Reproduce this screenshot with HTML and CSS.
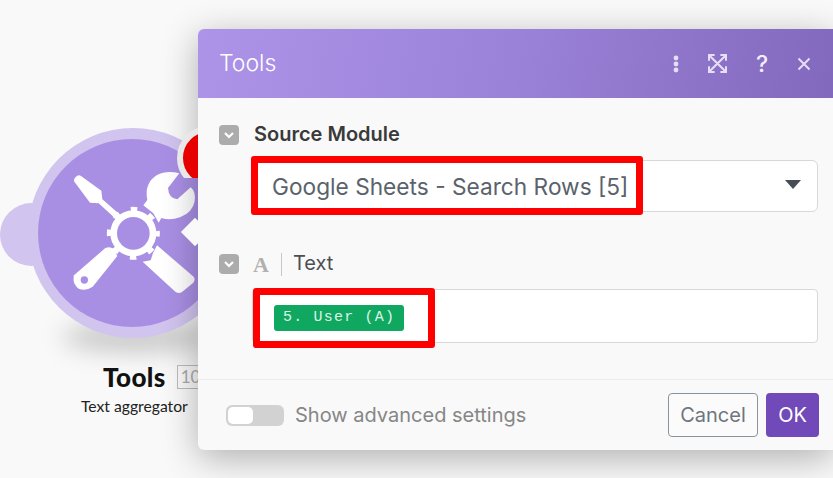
FILE: index.html
```html
<!DOCTYPE html>
<html lang="en">
<head>
<meta charset="utf-8">
<title>Tools</title>
<link rel="stylesheet" href="styles.css">
</head>
<body>
<main class="canvas">
  <section class="node">
    <div class="node-bump"></div>
    <div class="node-shadow"></div>
    <div class="node-ring"></div>
    <div class="node-disc"></div>
    <svg class="node-icon" viewBox="0 0 450 450" aria-hidden="true">
      <path class="tool" d="M42 64 Q41 56 47 51 L52 47 Q58 44 63 48 L124 92 L127 118 L174 159 L162 172 L116 130 L90 128 Z"/>
      <path class="tool" d="M136 264 Q150 258 160 266 L172 288 L98 380 Q78 394 56 386 Q36 372 42 346 Z"/>
      <circle class="hole" cx="73" cy="360" r="11"/>
      <path class="tool" d="M291 256 L401 350 Q407 358 400 368 L366 396 Q356 403 346 395 L248 305 L272 301 L279 279 Z"/>
      <path class="tool" d="M250 136 L262 120 Q252 70 290 46 Q320 30 358 40 L324 84 Q326 116 352 118 L392 82 Q408 95 404 124 Q398 158 360 172 Q330 182 304 174 L296 188 L280 160 Z"/>
      <circle class="gear-ring" cx="220" cy="220" r="59"/>
      <circle class="gear-teeth" cx="220" cy="220" r="73"/>
    </svg>
    <div class="node-title">
      <span class="node-name">Tools</span>
      <span class="node-id">10</span>
    </div>
    <div class="node-sub">Text aggregator</div>
  </section>

  <section class="dialog">
    <header class="dialog-head">
      <h1 class="dialog-title">Tools</h1>
      <div class="dialog-actions">
        <svg class="action action-dots" viewBox="0 0 6 18" aria-hidden="true"><circle cx="3" cy="3" r="2.4"/><circle cx="3" cy="9" r="2.4"/><circle cx="3" cy="15" r="2.4"/></svg>
        <svg class="action action-expand" viewBox="0 0 20 20" aria-hidden="true"><path d="M1 7V1h6M13 1h6v6M19 13v6h-6M7 19H1v-6M2 2l16 16M18 2L2 18"/></svg>
        <span class="action-help">?</span>
        <svg class="action action-close" viewBox="0 0 14 14" aria-hidden="true"><path d="M1.5 1.5l11 11M12.5 1.5l-11 11"/></svg>
      </div>
    </header>

    <div class="dialog-body">
      <div class="field-label">
        <span class="chev"><svg viewBox="0 0 12 8" aria-hidden="true"><path d="M2 2l4 4 4-4"/></svg></span>
        <span class="label-strong">Source Module</span>
      </div>
      <div class="select">
        <span class="select-value">Google Sheets - Search Rows [5]</span>
        <span class="select-arrow"></span>
      </div>

      <div class="field-label field-label-next">
        <span class="chev"><svg viewBox="0 0 12 8" aria-hidden="true"><path d="M2 2l4 4 4-4"/></svg></span>
        <span class="type-a">A</span>
        <span class="type-sep"></span>
        <span class="label-plain">Text</span>
      </div>
      <div class="text-input">
        <span class="pill">5. User (A)</span>
      </div>
    </div>

    <footer class="dialog-foot">
      <div class="toggle"><span class="toggle-knob"></span></div>
      <span class="toggle-label">Show advanced settings</span>
      <div class="foot-buttons">
        <button class="btn btn-cancel" type="button">Cancel</button>
        <button class="btn btn-ok" type="button">OK</button>
      </div>
    </footer>

    <div class="mark mark-select"></div>
    <div class="mark mark-input"></div>
  </section>

  <div class="node-badge"></div>
</main>
</body>
</html>
```

FILE: styles.css
```css
* { box-sizing: border-box; }
html, body { margin: 0; height: 100%; }
body { background: #f9f9f9; overflow: hidden; }

.canvas {
  position: relative;
  width: 833px;
  height: 478px;
  overflow: hidden;
  font-family: Inter, "Liberation Sans", sans-serif;
}

/* node on the free canvas */
.node { position: absolute; left: 0; top: 0; width: 240px; height: 430px; }
.node-bump { position: absolute; left: 0; top: 203px; width: 63px; height: 63px; border-radius: 50%; background: #d1c4ee; }
.node-shadow { position: absolute; left: 62px; top: 322px; width: 150px; height: 30px; border-radius: 50%; background: rgba(0,0,0,.2); filter: blur(12px); }
.node-ring { position: absolute; left: 28px; top: 128px; width: 210px; height: 210px; border-radius: 50%; background: #d1c4ee; }
.node-disc { position: absolute; left: 38px; top: 139px; width: 188px; height: 188px; border-radius: 50%; background: #a98fe4; }
.node-icon { position: absolute; left: 60px; top: 160px; width: 150px; height: 150px; }
.tool { fill: #fff; }
.hole { fill: #a98fe4; }
.gear-ring { fill: none; stroke: #fff; stroke-width: 20; }
.gear-teeth { fill: none; stroke: #fff; stroke-width: 13; stroke-dasharray: 20 37.3; stroke-dashoffset: 10; }
.node-title { position: absolute; left: 103px; top: 363px; display: flex; align-items: center; gap: 11px; }
.node-name { font-family: Lato, sans-serif; font-weight: 900; font-size: 26px; line-height: 28px; color: #111; letter-spacing: .4px; }
.node-id { width: 40px; height: 24px; border: 1px solid #bbb; color: #aaa; font-family: Lato, sans-serif; font-size: 17px; line-height: 22px; padding-left: 3px; }
.node-sub { position: absolute; left: 81px; top: 397px; font-family: Lato, sans-serif; font-size: 15.7px; line-height: 18px; color: #222; white-space: nowrap; }

/* badge stays bright above the dialog's shadow, cut off at the dialog edge */
.node-badge { position: absolute; left: 177px; top: 126px; width: 21px; height: 52px; overflow: hidden; }
.node-badge::before { content: ""; display: block; width: 52px; height: 52px; border-radius: 50%; background: #e60000; border: 6px solid #e8e8e8; }

/* dialog */
.dialog {
  position: absolute;
  left: 198px;
  top: 29px;
  width: 635px;
  height: 421px;
  display: flex;
  flex-direction: column;
  background: #f9f9f9;
  border-radius: 6px 0 0 6px;
  box-shadow: 0 8px 36px rgba(0,0,0,.3);
}
.dialog::before {
  content: "";
  position: absolute;
  left: -13px;
  top: 193px;
  width: 20px;
  height: 20px;
  background: #f9f9f9;
  transform: rotate(45deg);
}
.dialog-head {
  height: 69px;
  flex: none;
  display: flex;
  align-items: center;
  justify-content: space-between;
  padding: 0 22px 0 21px;
  border-radius: 6px 0 0 0;
  background: linear-gradient(100deg, #ad94e9 0%, #9a82d8 50%, #8369bd 100%);
}
.dialog-title { margin: 0; font-size: 23px; font-weight: 350; color: #fff; line-height: 1; }
.dialog-actions { display: flex; align-items: center; }
.action { display: block; flex: none; }
.action-dots { width: 6px; height: 18px; fill: #e6def6; margin-right: 29px; }
.action-expand { width: 19px; height: 19px; fill: none; stroke: #e6def6; stroke-width: 2.2; margin-right: 28px; }
.action-help { width: 14px; font-size: 23px; font-weight: 500; line-height: 20px; color: #f2eefb; margin-right: 28px; text-align: center; }
.action-close { width: 14px; height: 14px; fill: none; stroke: #e6def6; stroke-width: 2; }

.dialog-body { flex: 1; padding: 27px 15px 0 21px; }
.field-label { display: flex; align-items: center; height: 20px; }
.field-label-next { margin-top: 42px; }
.chev { width: 20px; height: 20px; flex: none; display: flex; align-items: center; justify-content: center; border-radius: 4px; background: #acacac; }
.chev svg { width: 12px; height: 8px; fill: none; stroke: #fff; stroke-width: 2.2; }
.label-strong { margin: -3px 0 0 15px; font-size: 20px; font-weight: 600; color: #3a3a3a; white-space: nowrap; }
.type-a { margin-left: 14px; width: 16px; font-family: "Liberation Serif", serif; font-weight: 700; font-size: 22px; line-height: 20px; color: #b1b1b1; padding-top: 1px; }
.type-sep { margin-left: 12px; width: 1px; height: 23px; background: #c8c8c8; }
.label-plain { margin: -3px 0 0 11px; font-size: 20px; color: #4b4f55; }

.select {
  margin: 15px 0 0 33px;
  height: 52px;
  display: flex;
  align-items: center;
  justify-content: space-between;
  padding: 0 16px 0 19px;
  background: #fff;
  border: 1px solid #d8d8d8;
  border-radius: 6px;
}
.select-value { font-size: 22.7px; color: #5a626b; white-space: nowrap; }
.select-arrow { width: 0; height: 0; margin-top: -4px; border-left: 8px solid transparent; border-right: 8px solid transparent; border-top: 9px solid #474d57; }

.text-input {
  margin: 15px 0 0 33px;
  height: 54px;
  display: flex;
  align-items: center;
  padding: 0 21px;
  background: #fff;
  border: 1px solid #d8d8d8;
  border-radius: 4px;
}
.pill {
  height: 26px;
  width: 130px;
  margin-top: 4px;
  padding-left: 9px;
  background: #10a861;
  border-radius: 3px;
  font-family: "Liberation Mono", monospace;
  font-size: 15px;
  line-height: 25px;
  letter-spacing: 1.2px;
  color: #d9f5e6;
  white-space: nowrap;
}

.dialog-foot {
  height: 71px;
  flex: none;
  display: flex;
  align-items: center;
  padding: 0 14px 0 28px;
  border-top: 1px solid #ececec;
}
.toggle { width: 58px; height: 21px; padding: 2px; background: #d2d2d2; border-radius: 6px; }
.toggle-knob { display: block; width: 25px; height: 17px; background: #fff; border-radius: 5px; }
.toggle-label { margin-left: 11px; font-size: 20px; color: #868686; white-space: nowrap; }
.foot-buttons { margin-left: auto; display: flex; gap: 8px; }
.btn { height: 44px; border-radius: 4px; font-family: inherit; font-size: 20px; padding: 0; }
.btn-cancel { width: 90px; background: #fbfbfb; border: 1px solid #8a949c; color: #6d7680; }
.btn-ok { width: 53px; background: #7149b9; border: 0; color: #fff; }

/* red annotation frames drawn over the form */
.mark { position: absolute; border: 7px solid #ff0000; border-radius: 3px; }
.mark-select { left: 53px; top: 127px; width: 392px; height: 59px; }
.mark-input { left: 55px; top: 259px; width: 182px; height: 60px; }
```
